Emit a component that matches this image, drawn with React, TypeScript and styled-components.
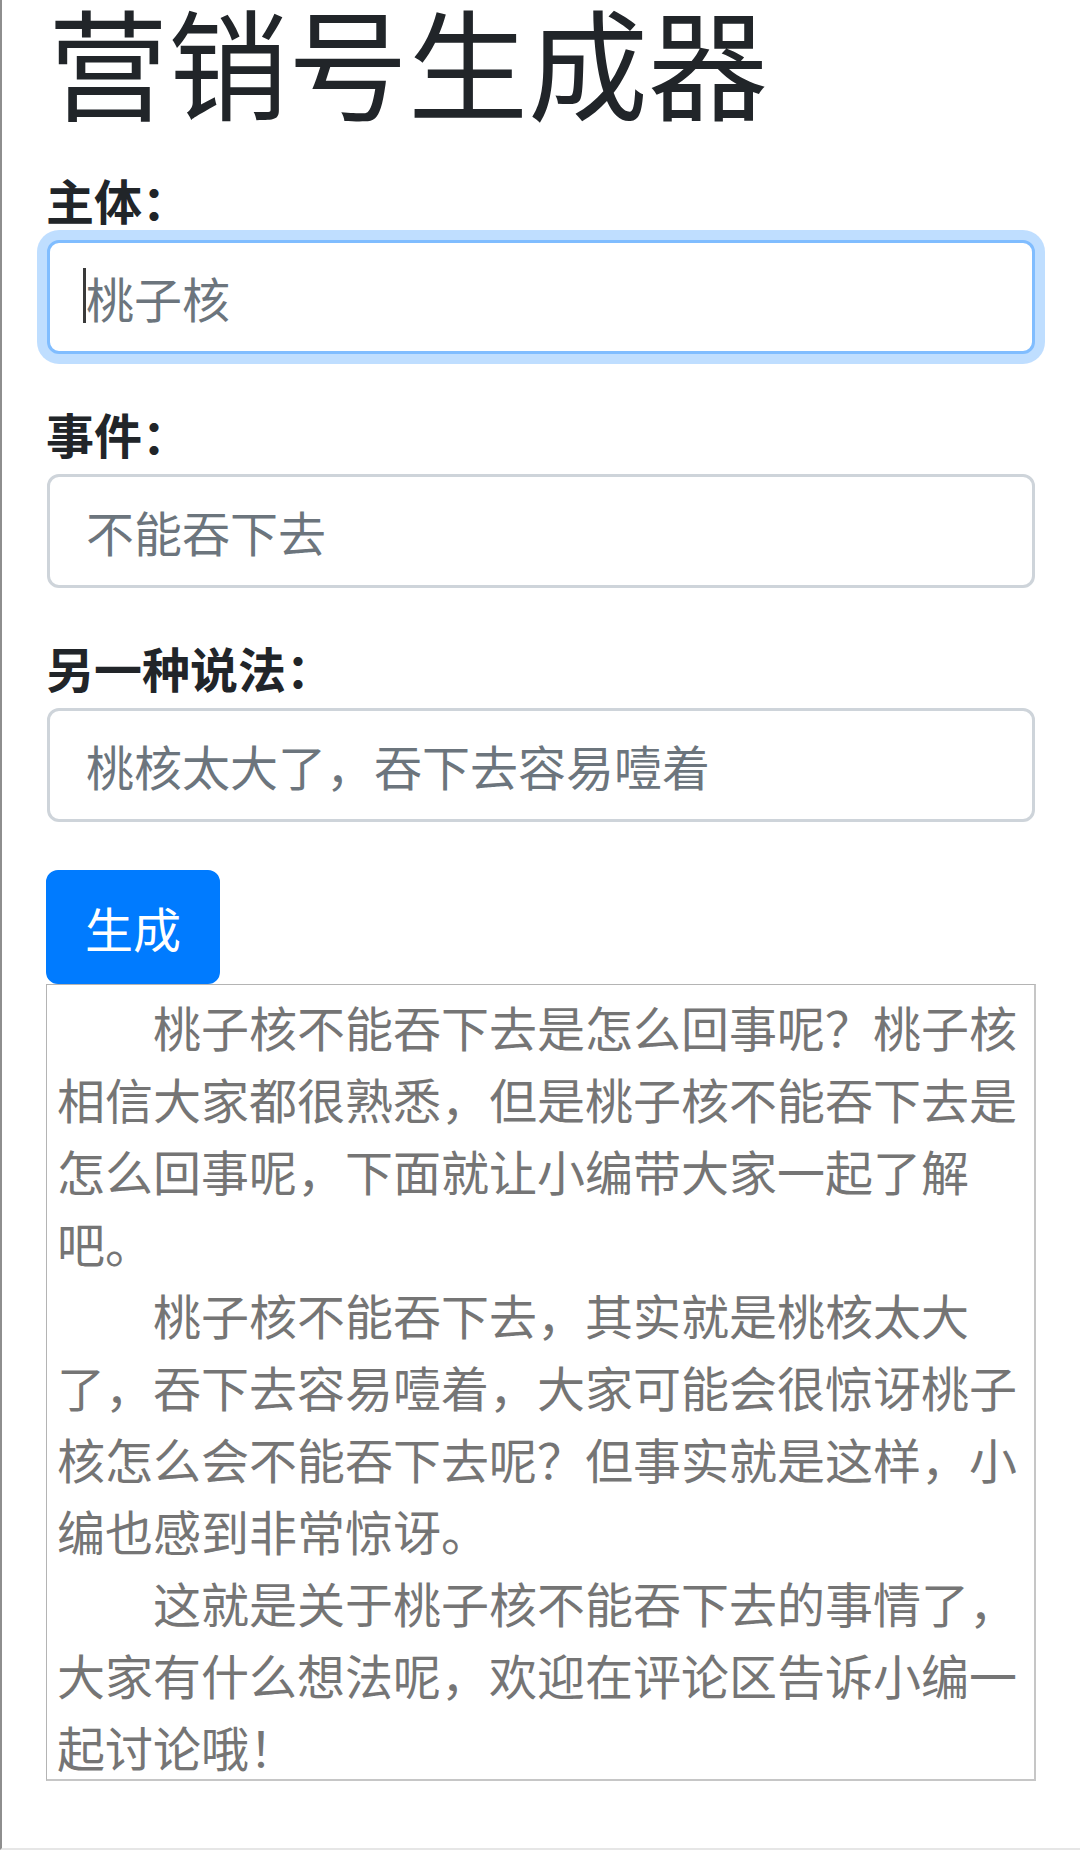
import React from "react";
import styled, { createGlobalStyle, css } from "styled-components";

const GlobalStyle = createGlobalStyle`
  html, body {
    margin: 0;
    padding: 0;
    background: #ffffff;
  }
  body {
    font-family: "Noto Sans CJK SC", "Noto Sans", sans-serif;
    color: #212529;
  }
  * { box-sizing: border-box; }
`;

const Frame = styled.div`
  height: 1850px;
  border-left: 2px solid #8e8e8e;
  border-bottom: 2px solid #e6e6e6;
  overflow: hidden;
`;

const Container = styled.main`
  padding: 0 45px 0 44px;
  display: flex;
  flex-direction: column;
`;

const Title = styled.h1`
  margin: 0 0 43px;
  font-size: 120px;
  line-height: 120px;
  font-weight: 400;
  color: #212529;
  padding-left: 2px;
`;

const Form = styled.form`
  display: flex;
  flex-direction: column;
  gap: 43px;
  margin-bottom: 48px;
`;

const Group = styled.div`
  display: flex;
  flex-direction: column;
  gap: 5px;
`;

const Label = styled.label`
  font-size: 48px;
  line-height: 72px;
  font-weight: 700;
  color: #212529;
`;

const FieldWrap = styled.div`
  position: relative;
  padding: 0 0 0 1px;
`;

const Input = styled.input<{ $focused?: boolean }>`
  display: block;
  width: 100%;
  height: 114px;
  padding: 18px 36px;
  font-family: "Noto Sans CJK SC", "Noto Sans", sans-serif;
  font-size: 48px;
  line-height: 72px;
  color: #495057;
  background: #ffffff;
  border: 3px solid #ced4da;
  border-radius: 12px;
  outline: none;
  caret-color: transparent;
  &::placeholder {
    color: #6c757d;
    opacity: 1;
  }
  ${(p) =>
    p.$focused &&
    css`
      border-color: #80bdff;
      box-shadow: 0 0 0 10px rgba(0, 123, 255, 0.25);
    `}
`;

const Caret = styled.span`
  position: absolute;
  left: 37px;
  top: 28px;
  width: 3px;
  height: 55px;
  background: #3a3a3a;
`;

const Button = styled.button`
  align-self: flex-start;
  height: 114px;
  padding: 18px 36px;
  font-family: "Noto Sans CJK SC", "Noto Sans", sans-serif;
  font-size: 48px;
  line-height: 72px;
  color: #ffffff;
  background: #007bff;
  border: 3px solid #007bff;
  border-radius: 12px;
`;

const Output = styled.div`
  margin-right: -1px;
  height: 797px;
  padding: 5px 10px 0 10px;
  border-style: solid;
  border-width: 1px 2px 2px 1px;
  border-color: #b4b4b4 #c6c6c6 #c6c6c6 #b4b4b4;
  color: #757575;
  font-size: 48px;
  line-height: 72px;
`;

const Paragraph = styled.p`
  margin: 0;
  text-indent: 96px;
`;

const fields = [
  { label: "主体：", placeholder: "桃子核", focused: true },
  { label: "事件：", placeholder: "不能吞下去", focused: false },
  { label: "另一种说法：", placeholder: "桃核太大了，吞下去容易噎着", focused: false },
];

const paragraphs = [
  "桃子核不能吞下去是怎么回事呢？桃子核相信大家都很熟悉，但是桃子核不能吞下去是怎么回事呢，下面就让小编带大家一起了解吧。",
  "桃子核不能吞下去，其实就是桃核太大了，吞下去容易噎着，大家可能会很惊讶桃子核怎么会不能吞下去呢？但事实就是这样，小编也感到非常惊讶。",
  "这就是关于桃子核不能吞下去的事情了，大家有什么想法呢，欢迎在评论区告诉小编一起讨论哦！",
];

export default function App() {
  return (
    <>
      <GlobalStyle />
      <Frame>
        <Container>
          <Title>营销号生成器</Title>
          <Form onSubmit={(e) => e.preventDefault()}>
            {fields.map((f) => (
              <Group key={f.label}>
                <Label>{f.label}</Label>
                <FieldWrap>
                  <Input $focused={f.focused} placeholder={f.placeholder} readOnly />
                  {f.focused && <Caret />}
                </FieldWrap>
              </Group>
            ))}
          </Form>
          <Button type="button">生成</Button>
          <Output>
            {paragraphs.map((t) => (
              <Paragraph key={t}>{t}</Paragraph>
            ))}
          </Output>
        </Container>
      </Frame>
    </>
  );
}
